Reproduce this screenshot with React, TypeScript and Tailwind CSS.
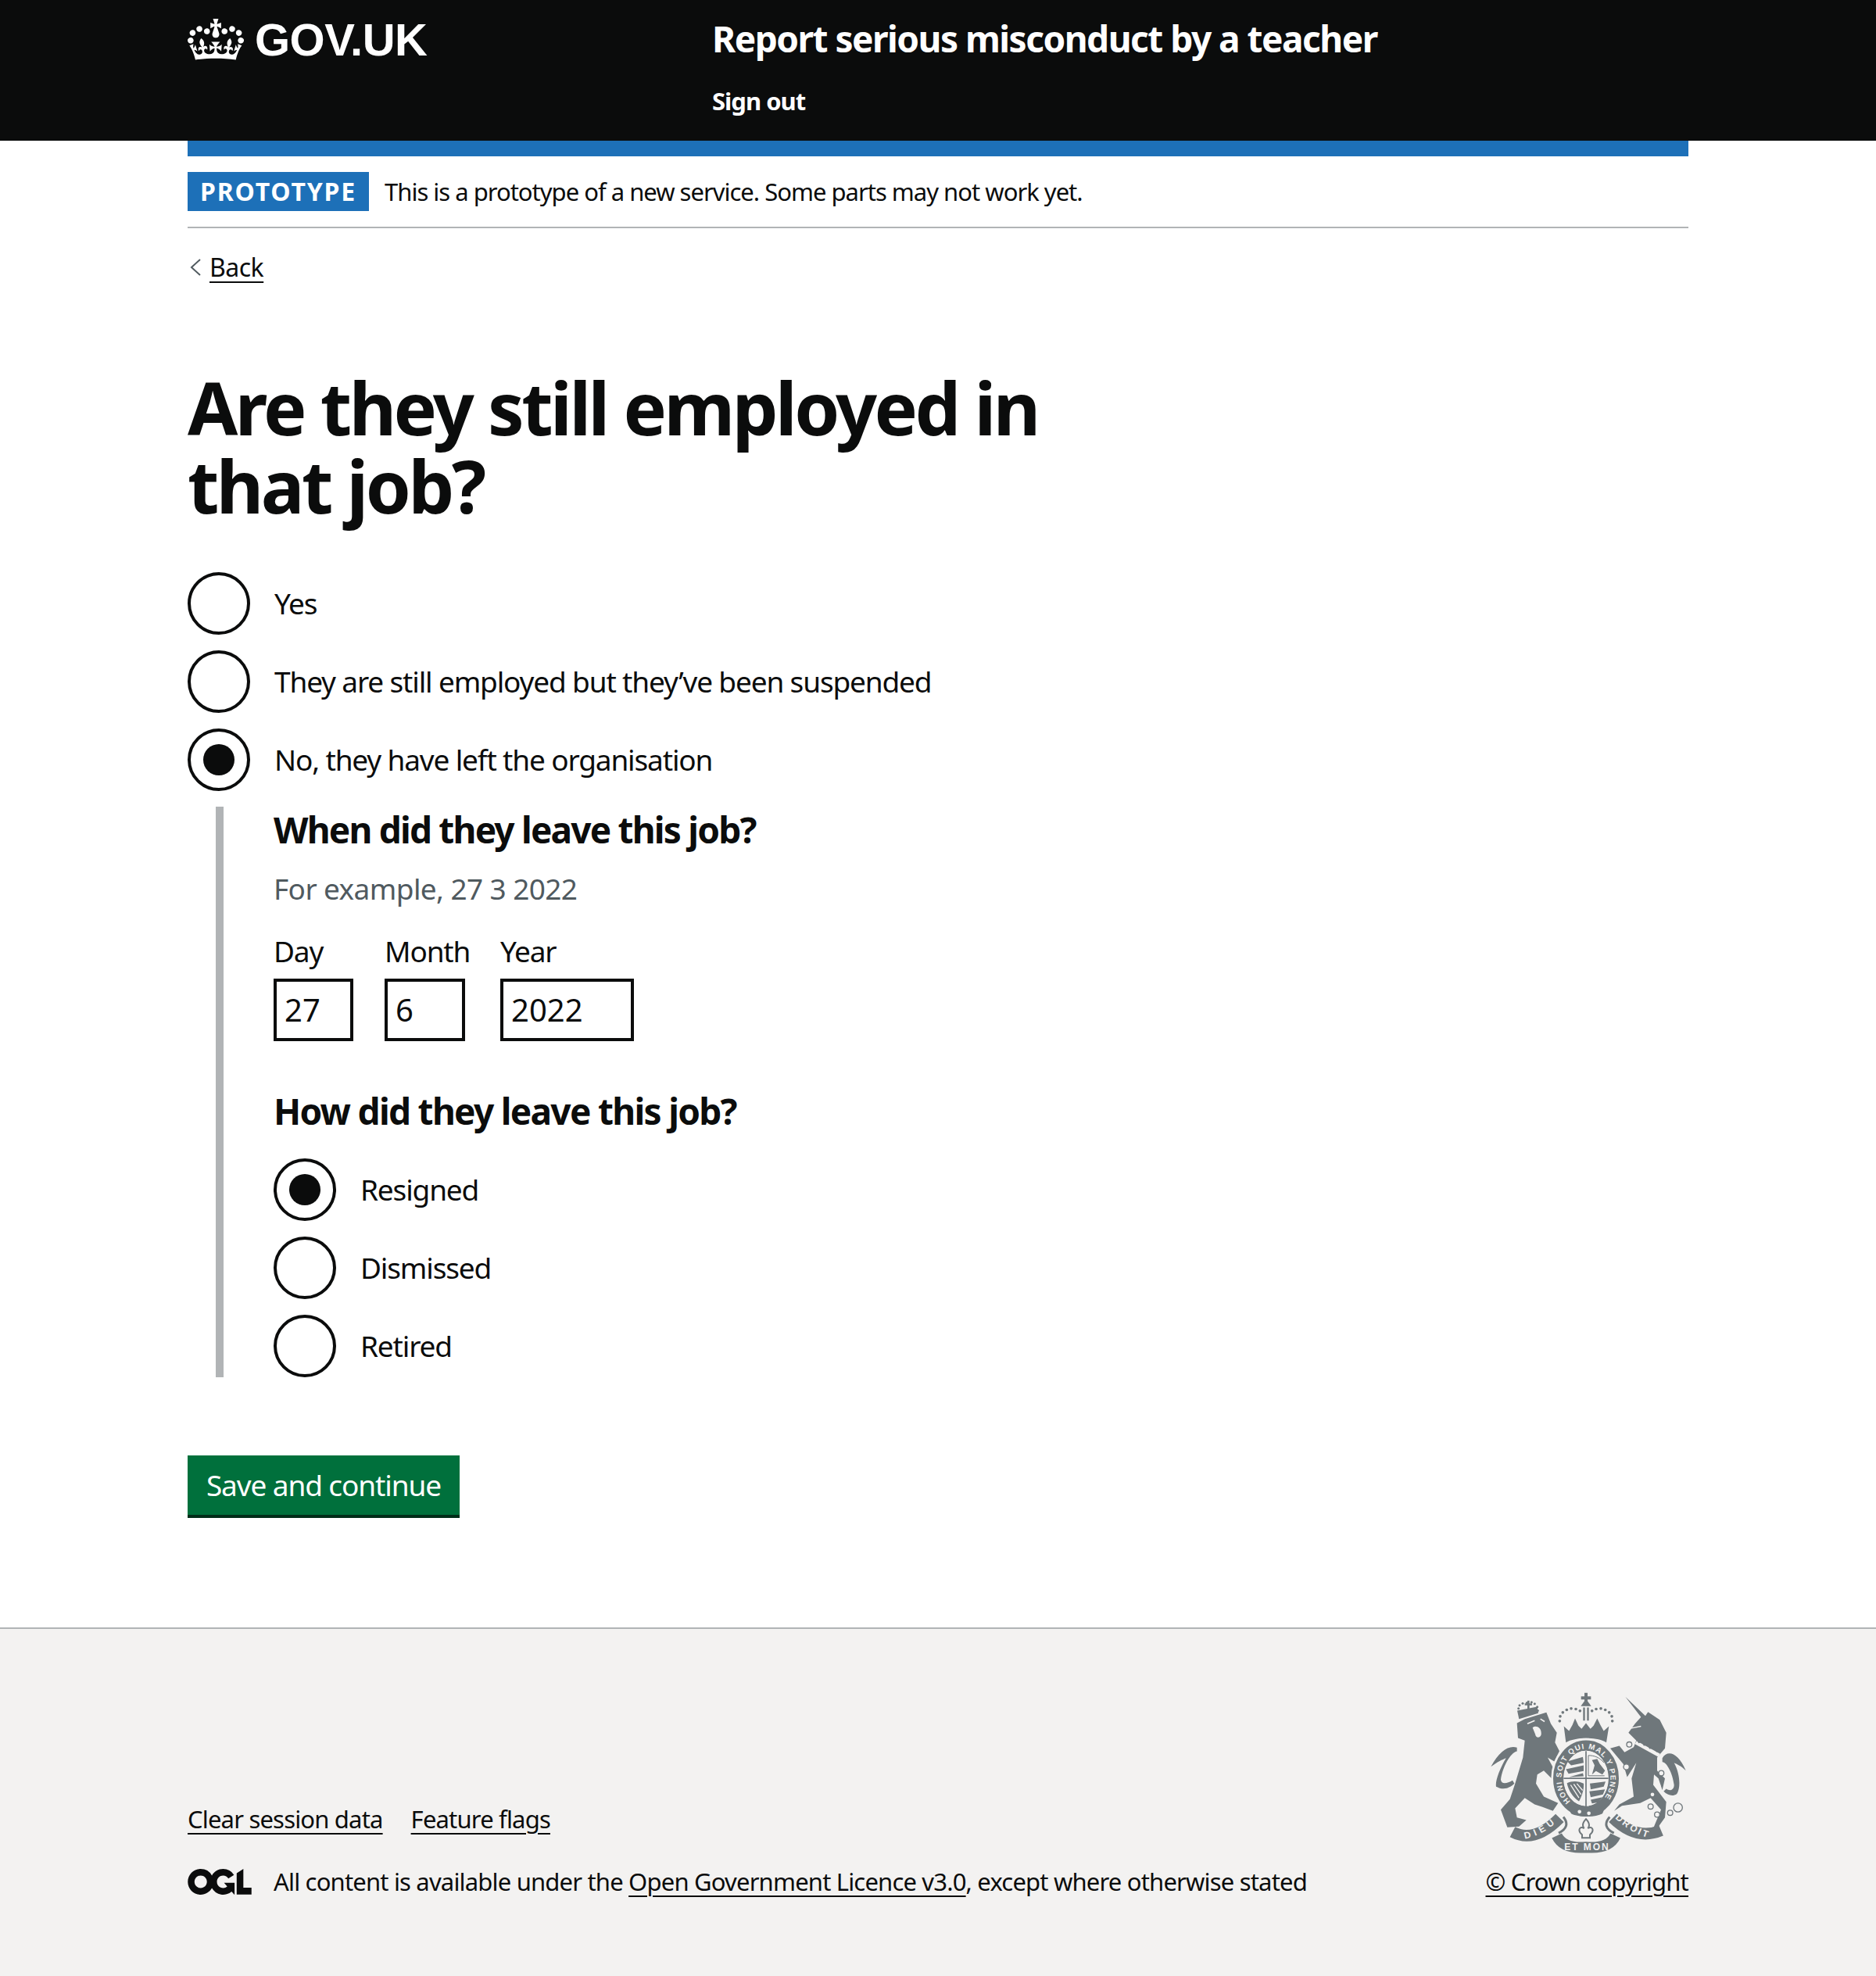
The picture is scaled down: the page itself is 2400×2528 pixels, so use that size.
const sans = "font-['Noto_Sans',sans-serif]"

function Crown() {
  return (
    <svg viewBox="0 0 132 97" width="72" height="53" aria-hidden className="shrink-0">
      <path
        fill="currentColor"
        fillRule="evenodd"
        d="M25 30.2c3.5 1.5 7.7-.2 9.1-3.7 1.5-3.6-.2-7.8-3.9-9.2-3.6-1.4-7.6.3-9.1 3.9-1.4 3.5.3 7.5 3.9 9zM9 39.5c3.6 1.5 7.8-.2 9.2-3.7 1.5-3.6-.2-7.8-3.9-9.1-3.6-1.5-7.6.2-9.1 3.8-1.4 3.5.3 7.5 3.8 9zM4.4 57.2c3.5 1.5 7.7-.2 9.1-3.8 1.5-3.6-.2-7.7-3.9-9.1-3.5-1.5-7.6.3-9.1 3.8-1.4 3.5.3 7.6 3.9 9.1zm38.3-21.4c3.5 1.5 7.7-.2 9.1-3.8 1.5-3.6-.2-7.7-3.9-9.1-3.6-1.5-7.6.3-9.1 3.8-1.3 3.6.4 7.7 3.9 9.1zm64.4-5.6c-3.6 1.5-7.8-.2-9.1-3.7-1.5-3.6.2-7.8 3.8-9.2 3.6-1.4 7.7.3 9.2 3.9 1.3 3.5-.4 7.5-3.9 9zm15.9 9.3c-3.6 1.5-7.7-.2-9.1-3.7-1.5-3.6.2-7.8 3.7-9.1 3.6-1.5 7.7.2 9.2 3.8 1.5 3.5-.3 7.5-3.8 9zm4.7 17.7c-3.6 1.5-7.8-.2-9.2-3.8-1.5-3.6.2-7.7 3.9-9.1 3.6-1.5 7.7.3 9.2 3.8 1.3 3.5-.4 7.6-3.9 9.1zM89.3 35.8c-3.6 1.5-7.8-.2-9.2-3.8-1.4-3.6.2-7.7 3.9-9.1 3.6-1.5 7.7.3 9.2 3.8 1.4 3.6-.3 7.7-3.9 9.1zM69.7 17.7l8.9 4.7V9.3l-8.9 2.8c-.2-.3-.5-.6-.9-.9L72.4 0H59.6l3.6 11.2c-.3.3-.6.5-.9.9l-8.8-2.8v13.1l8.8-4.7c.3.3.6.7.9.9l-5 15.4v.1c-.2.8-.4 1.6-.4 2.4 0 4.1 3.1 7.5 7 8.1h.2c.3 0 .7.1 1 .1.4 0 .7 0 1-.1h.2c4-.6 7.1-4.1 7.1-8.1 0-.8-.1-1.7-.4-2.4V34l-5.1-15.4c.4-.2.7-.6 1-.9zM66 92.8c16.9 0 32.8 1.1 47.1 3.2 4-16.9 8.9-26.7 14-33.5l-9.6-3.4c1 4.9 1.1 7.2 0 10.2-1.5-1.4-3-4.3-4.2-8.7L108.6 76c2.8-2 5-3.2 7.5-3.3-4.4 9.4-10 11.9-13.6 11.2-4.3-.8-6.3-4.6-5.6-7.9 1-4.7 5.7-5.9 8-.5 4.3-8.7-3-11.4-7.6-8.8 7.1-7.2 7.9-13.5 2.1-21.1-8 6.1-8.1 12.3-4.5 20.8-4.7-5.4-12.1-2.5-9.5 6.2 3.4-5.2 7.9-2 7.2 3.1-.6 4.3-6.4 7.8-13.5 7.2-10.3-.9-10.9-8-11.2-13.8 2.5-.5 7.1 1.8 11 7.3L80.2 60c-4.1 4.4-8 5.3-12.3 5.4 1.4-4.4 8-11.6 8-11.6H55.5s6.4 7.2 7.9 11.6c-4.2-.1-8-1-12.3-5.4l1.4 16.4c3.9-5.5 8.5-7.7 10.9-7.3-.3 5.8-.9 12.8-11.1 13.8-7.2.6-12.9-2.9-13.5-7.2-.7-5 3.8-8.3 7.1-3.1 2.7-8.7-4.6-11.6-9.4-6.2 3.7-8.5 3.6-14.7-4.6-20.8-5.8 7.6-5 13.9 2.2 21.1-4.7-2.6-11.9.1-7.7 8.8 2.3-5.5 7.1-4.2 8.1.5.7 3.3-1.3 7.1-5.7 7.9-3.5.7-9-1.8-13.5-11.2 2.5.1 4.7 1.3 7.5 3.3l-4.7-15.4c-1.2 4.4-2.7 7.2-4.3 8.7-1.1-3-.9-5.3 0-10.2l-9.5 3.4c5 6.9 9.9 16.7 14 33.5 14.8-2.1 30.8-3.2 47.7-3.2z"
      />
    </svg>
  )
}

function OglLogo() {
  return (
    <svg viewBox="0 0 483.2 195.7" width="82" height="33" aria-hidden className="shrink-0">
      <path
        fill="currentColor"
        d="M421.5 142.8V.1l-50.7 32.3v161.1h112.4v-50.7zm-122.3-9.6A47.12 47.12 0 0 1 221 97.8c0-26 21.1-47.1 47.1-47.1 16.7 0 31.4 8.7 39.7 21.8l42.7-27.2A97.63 97.63 0 0 0 268.1 0c-36.5 0-68.3 20.1-85.1 49.7A98 98 0 0 0 97.8 0C43.9 0 0 43.9 0 97.8s43.9 97.8 97.8 97.8c36.5 0 68.3-20.1 85.1-49.7a97.76 97.76 0 0 0 149.6 25.4l19.4 22.2h3v-87.8h-80l24.3 27.5zM97.8 145c-26 0-47.1-21.1-47.1-47.1s21.1-47.1 47.1-47.1 47.2 21 47.2 47S123.8 145 97.8 145"
      />
    </svg>
  )
}

const crownDots: [number, number][] = [
  [396, 180], [398, 162], [408, 147], [423, 137], [440, 132], [458, 134], [474, 141],
  [598, 180], [596, 162], [586, 147], [571, 137], [554, 132], [536, 134], [520, 141],
]
const lionCrownDots: [number, number][] = [
  [238, 132], [242, 120], [254, 112], [270, 110], [288, 108], [300, 114], [310, 126], [312, 140],
]
const chainRings: [number, number, number][] = [
  [663, 270, 10], [652, 356, 11], [786, 380, 10], [745, 508, 10], [770, 539, 10], [820, 532, 10], [850, 512, 17],
]

// Royal arms, traced by hand from the footer crop (coordinates are crop px at 3x).
function RoyalArms() {
  const ink = '#6f777b'
  const paper = '#f3f2f1'
  return (
    <svg viewBox="125 70 765 620" width="255" height="207" aria-hidden>
      <g fill={ink}>
        {/* lion */}
        <path d="M232 188 L262 172 L345 147 L362 190 L385 225 L378 262 L395 295 L375 335 L350 320 L385 385 L405 420 L385 445 L365 400 L335 370 L310 385 L305 420 L335 470 L390 495 L370 525 L330 510 L300 500 L262 475 L225 515 L232 550 L268 560 L240 585 L195 588 L170 520 L205 480 L225 420 L255 320 L262 255 L236 245 Z" />
        <path d="M232 282 C200 272 165 295 132 355 C160 335 175 328 190 322 C165 365 148 410 152 432 C180 447 205 437 222 420 L215 408 C195 420 172 425 170 405 C176 360 205 302 232 296 Z" />
        <path d="M240 172 L233 140 L310 125 L314 150 Z" />
        <path d="M272 102 h8 v10 h10 v8 h-10 v14 h-8 v-14 h-10 v-8 h10 z" />
        {lionCrownDots.map(([x, y]) => (
          <circle key={`${x}-${y}`} cx={x} cy={y} r="4.5" />
        ))}
        {/* unicorn */}
        <path d="M648 87 L725 160 L735 145 L780 175 L805 225 L800 285 L770 320 L770 370 L800 400 L790 445 L775 400 L758 385 L755 425 L805 490 L800 550 L770 592 L758 585 L785 520 L745 475 L705 495 L635 505 L605 525 L625 500 L680 470 L672 400 L690 340 L655 395 L640 345 L590 285 L625 275 L645 300 L680 280 L690 255 L660 225 L685 190 L708 165 Z" />
        <path d="M790 322 C810 290 850 300 880 370 C860 350 845 345 835 340 C860 385 860 440 845 460 C830 470 810 465 795 450 L805 440 C820 450 835 445 835 425 C830 380 805 335 790 337 Z" />
        {/* crown */}
        <path d="M412 200 L432 218 L445 195 L455 170 L468 198 L480 210 L497 188 L514 210 L526 198 L540 170 L552 195 L565 218 L585 200 L575 262 C540 240 455 240 420 262 Z" />
        <path d="M491 72 h12 v13 h13 v12 h-13 v6 l14 20 h-40 l14 -20 v-6 h-13 v-12 h13 z" />
        <path d="M486 128 h7 v50 h-7 z M501 128 h7 v50 h-7 z" />
        {crownDots.map(([x, y]) => (
          <circle key={`${x}-${y}`} cx={x} cy={y} r="5.5" />
        ))}
      </g>
      {/* lion face and unicorn collar */}
      <path d="M272 190 L300 178 M322 172 L338 182" stroke={paper} strokeWidth="5" fill="none" />
      <path d="M292 205 C305 195 325 205 325 225 C328 245 305 250 302 230 Z" fill={paper} />
      <path d="M688 262 L778 312" stroke={paper} strokeWidth="14" fill="none" />
      <path d="M692 250 L700 262 L712 258 L720 272 L734 270 L742 284 L756 282 L770 298" stroke={ink} strokeWidth="5" fill="none" />
      <path d="M668 208 L708 200" stroke={paper} strokeWidth="4" fill="none" />
      {chainRings.map(([x, y, r]) => (
        <circle key={`${x}-${y}`} cx={x} cy={y} r={r} fill={paper} stroke={ink} strokeWidth="4" />
      ))}
      <circle cx="775" cy="428" r="8" fill={paper} />
      <circle cx="752" cy="462" r="7" fill={paper} />

      {/* garter and shield */}
      <path d="M420 268 C460 248 535 248 575 268" stroke={paper} strokeWidth="8" fill="none" />
      <ellipse cx="497" cy="400" rx="108" ry="128" fill={paper} stroke={paper} strokeWidth="52" />
      <ellipse cx="497" cy="400" rx="106" ry="126" fill="none" stroke={ink} strokeWidth="40" />
      <path d="M425 505 C450 520 470 525 497 530 L535 520 L575 500 L560 535 C530 550 470 550 440 535 Z" fill={ink} />
      <circle cx="472" cy="528" r="7" fill={paper} />
      <circle cx="508" cy="534" r="7" fill={paper} />
      <ellipse cx="497" cy="400" rx="86" ry="106" fill={paper} />
      <path d="M497 295 V510 M411 400 H583" stroke={ink} strokeWidth="5" />
      <g fill={ink}>
        {/* three lions, top left and bottom right */}
        <path d="M425 335 L485 318 L488 340 L440 350 Z M420 365 L488 350 L488 372 L430 382 Z M432 395 L485 380 L488 392 Z" />
        <path d="M512 420 L572 412 L565 432 L515 442 Z M510 450 L570 442 L562 462 L515 472 Z M515 482 L560 472 L545 492 L520 496 Z" />
        {/* single lion */}
        <path d="M520 330 L540 325 L550 345 L570 370 L560 385 L535 372 L520 385 L530 350 Z" />
        {/* harp */}
        <path d="M424 418 C445 408 470 410 488 420 C490 450 475 480 470 488 C450 475 430 450 424 418 Z" />
      </g>
      <path d="M438 425 L470 475 M450 422 L478 462 M462 420 L484 446" stroke={paper} strokeWidth="4" fill="none" />
      <path d="M506 312 V390 H568 M506 312 C530 312 550 320 566 340" stroke={ink} strokeWidth="3" fill="none" />
      <defs>
        <path id="garter" d="M437 488 A94 114 0 1 1 557 488" />
        <path id="ribbon-left" d="M262 632 Q325 622 392 562" />
        <path id="ribbon-right" d="M608 552 Q675 616 745 630" />
      </defs>
      <g fontFamily="'Liberation Sans', sans-serif" fontWeight="700" fill={paper}>
        <text fontSize="29">
          <textPath href="#garter" textLength="500">HONI SOIT QUI MAL Y PENSE</textPath>
        </text>
      </g>

      {/* motto ribbon */}
      <g fill="none" stroke={ink} strokeLinecap="butt">
        <path d="M215 606 Q300 650 396 552" strokeWidth="44" />
        <path d="M600 552 Q690 640 785 600" strokeWidth="44" />
        <path d="M385 620 Q410 672 497 664 Q585 672 610 620" strokeWidth="42" />
        <path d="M410 548 Q440 585 392 610 M588 548 Q555 585 604 610" strokeWidth="9" />
      </g>
      <path d="M497 556 C512 572 510 585 504 592 C520 580 532 600 512 616 L512 628 H482 L482 616 C462 600 474 580 490 592 C484 585 482 572 497 556 Z" fill={paper} stroke={ink} strokeWidth="6" />
      <g fontFamily="'Liberation Sans', sans-serif" fontWeight="700" fontSize="36" fill={paper}>
        <text>
          <textPath href="#ribbon-left" textLength="130">DIEU</textPath>
        </text>
        <text>
          <textPath href="#ribbon-right" textLength="145">DROIT</textPath>
        </text>
        <text x="414" y="676" textLength="168">ET MON</text>
      </g>
    </svg>
  )
}

function Radio({ label, checked = false }: { label: string; checked?: boolean }) {
  return (
    <div className="flex items-center gap-[31px]">
      <span className="flex h-20 w-20 shrink-0 items-center justify-center rounded-full border-4 border-[#0b0c0c] bg-white">
        {checked && <span className="h-10 w-10 rounded-full bg-[#0b0c0c]" />}
      </span>
      <span className="text-[37px] leading-[50px] tracking-[-1.15px]">{label}</span>
    </div>
  )
}

function DateField({ label, value, width, column }: { label: string; value: string; width: string; column: string }) {
  return (
    <div className={`flex flex-col gap-[10px] ${column}`}>
      <span className="text-[37px] leading-[50px] tracking-[-1.15px]">{label}</span>
      <div className={`flex h-20 items-center border-4 border-[#0b0c0c] px-[10px] text-[40px] ${width}`}>
        {value}
      </div>
    </div>
  )
}

export default function App() {
  return (
    <div className={`${sans} min-h-[2528px] bg-white text-[#0b0c0c]`}>
      <header className="h-[180px] bg-[#0b0c0c] text-white">
        <div className="mx-auto flex w-[1920px]">
          <a className="flex h-[100px] w-[671px] items-center gap-[14px] font-['Liberation_Sans',sans-serif] text-[58px] font-bold tracking-[-0.5px]">
            <Crown />
            GOV.UK
          </a>
          <div>
            <div className="flex h-[98px] items-center text-[46px] font-bold tracking-[-1.5px]">
              Report serious misconduct by a teacher
            </div>
            <div className="mt-[6px] text-[31px] leading-[50px] font-bold tracking-[-1px]">Sign out</div>
          </div>
        </div>
      </header>

      <main className="mx-auto w-[1920px]">
        <div className="h-5 bg-[#1d70b8]" />
        <div className="flex items-center gap-5 border-b-2 border-[#b1b4b6] pt-5 pb-5">
          <span className="flex h-[50px] w-[232px] items-center justify-center bg-[#1d70b8] text-[32px] font-bold tracking-[1.8px] text-white">
            PROTOTYPE
          </span>
          <span className="text-[31px] tracking-[-1px]">This is a prototype of a new service. Some parts may not work yet.</span>
        </div>

        <div className="mt-[28px] flex h-11 items-center gap-[11px] pl-[3px] text-[32px] tracking-[-0.5px]">
          <svg viewBox="0 0 14 24" width="14" height="24" fill="none" aria-hidden>
            <path d="M13 2 L2 12 L13 22" stroke="#505a5f" strokeWidth="2" />
          </svg>
          <span className="underline decoration-2 underline-offset-[6px]">Back</span>
        </div>

        <h1 className="mt-[107px] w-[1200px] text-[93px] leading-[100px] font-bold tracking-[-3.5px]">
          Are they still employed in that job?
        </h1>

        <div className="mt-[61px] flex flex-col gap-5">
          <Radio label="Yes" />
          <Radio label="They are still employed but they’ve been suspended" />
          <Radio label="No, they have left the organisation" checked />
        </div>

        <section className="mt-5 ml-9 border-l-[10px] border-[#b1b4b6] pl-[64px]">
          <h2 className="text-[46px] leading-[58px] font-bold tracking-[-1.8px]">When did they leave this job?</h2>
          <p className="mt-[22px] text-[37px] leading-[50px] tracking-[-0.6px] text-[#505a5f]">For example, 27 3 2022</p>
          <div className="mt-[30px] flex gap-10">
            <DateField label="Day" value="27" width="w-[102px]" column="w-[102px]" />
            <DateField label="Month" value="6" width="w-[103px]" column="w-[108px]" />
            <DateField label="Year" value="2022" width="w-[171px]" column="w-[171px]" />
          </div>
          <h2 className="mt-[60px] text-[46px] leading-[58px] font-bold tracking-[-1.7px]">How did they leave this job?</h2>
          <div className="mt-[32px] flex flex-col gap-5">
            <Radio label="Resigned" checked />
            <Radio label="Dismissed" />
            <Radio label="Retired" />
          </div>
        </section>

        <button
          type="button"
          className="mt-[100px] h-20 w-[348px] border-b-4 border-[#002d18] bg-[#00703c] text-[37px] tracking-[-1.1px] text-white"
        >
          Save and continue
        </button>
      </main>

      <footer className="mt-[140px] h-[446px] border-t-2 border-[#b1b4b6] bg-[#f3f2f1]">
        <div className="mx-auto flex w-[1920px] items-end justify-between pt-[81px] text-[31px] tracking-[-0.82px]">
          <div>
            <div className="flex gap-[36px]">
              <span className="underline decoration-2 underline-offset-[6px]">Clear session data</span>
              <span className="underline decoration-2 underline-offset-[6px]">Feature flags</span>
            </div>
            <div className="mt-[34px] flex items-center gap-[28px]">
              <OglLogo />
              <span>
                All content is available under the{' '}
                <span className="underline decoration-2 underline-offset-[6px]">Open Government Licence v3.0</span>,
                except where otherwise stated
              </span>
            </div>
          </div>
          <div className="flex flex-col items-end gap-3">
            <RoyalArms />
            <span className="underline decoration-2 underline-offset-[6px]">© Crown copyright</span>
          </div>
        </div>
      </footer>
    </div>
  )
}
